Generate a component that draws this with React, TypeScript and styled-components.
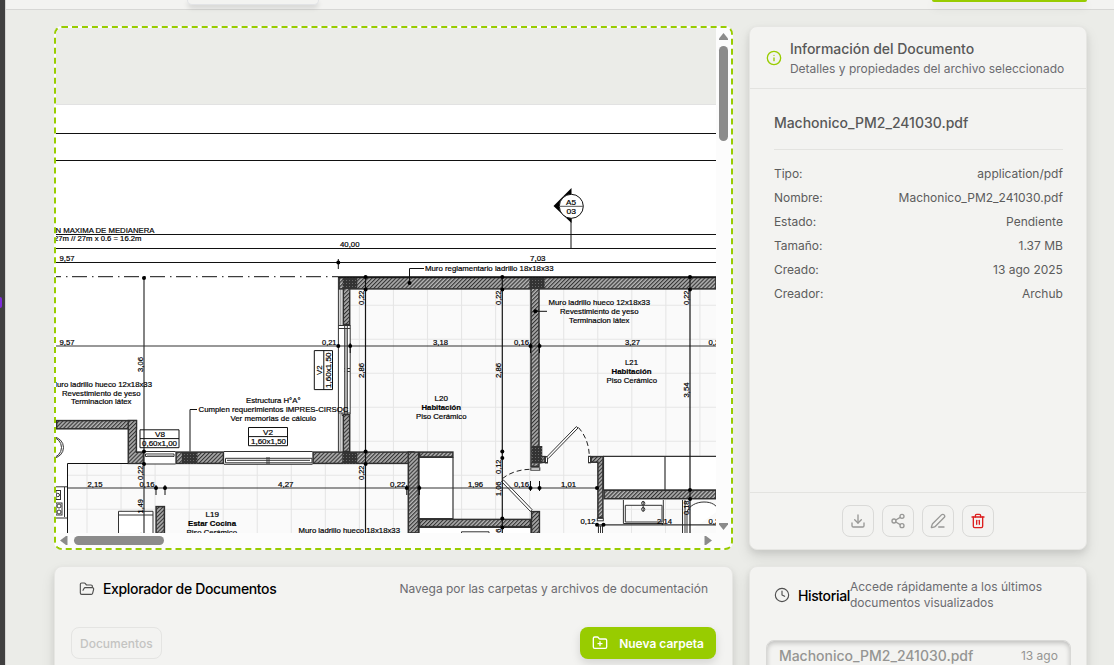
import React from 'react';
import styled, { createGlobalStyle, css } from 'styled-components';
import { Clock, Download, FolderOpen, FolderPlus, Info, PenLine, Share2, Trash2 } from 'lucide-react';

const GlobalStyle = createGlobalStyle`
  * { box-sizing: border-box; }
  body { margin: 0; overflow: hidden; font-family: Inter, sans-serif; background: #ebece8; }
  h2, h3, p, dl, dt, dd { margin: 0; font-weight: 400; }
  button { font-family: inherit; margin: 0; }
`;

const Shell = styled.div`
  display: flex;
  height: 665px;
  overflow: hidden;
  background: #ebece8;
  color: #4f4f4f;
`;

const Rail = styled.aside`
  display: flex;
  align-items: flex-start;
  flex: 0 0 6px;
  padding-top: 297px;
  background: #404040;
  border-right: 1px solid #d5d5d3;
`;

const RailMark = styled.span`
  width: 2px;
  height: 11px;
  border-radius: 0 3px 3px 0;
  background: #7c2bd9;
`;

const Page = styled.div`
  flex: 1;
  min-width: 0;
`;

const TopBar = styled.header`
  display: flex;
  justify-content: space-between;
  align-items: flex-start;
  height: 10px;
  padding: 0 27px 0 181px;
  background: #f3f3f1;
  border-bottom: 1px solid #d7d7d5;
`;

const TabsPill = styled.div`
  width: 132px;
  height: 5px;
  border: 1px solid #e2e3e6;
  border-top: 0;
  border-radius: 0 0 8px 8px;
  background: #f3f3f1;
  box-shadow: 0 3px 5px rgba(0, 0, 0, 0.14);
`;

const TopAction = styled.div`
  width: 155px;
  height: 2px;
  border-radius: 0 0 6px 6px;
  background: #98cc00;
  box-shadow: 0 5px 10px rgba(0, 0, 0, 0.16);
`;

const Grid = styled.main`
  display: grid;
  grid-template-columns: 679px 338px;
  grid-template-rows: 524px 160px;
  gap: 16px 16.4px;
  padding: 16px 0 0 48px;
`;

const cardBase = css`
  border: 1px solid #e6e6e3;
  border-radius: 8px;
  background: #f3f3f1;
  box-shadow: 0 7px 14px rgba(0, 0, 0, 0.1), 0 3px 6px rgba(0, 0, 0, 0.07);
`;

const Card = styled.section`
  ${cardBase}
  display: flex;
  flex-direction: column;
`;

const Viewer = styled.section`
  display: grid;
  grid-template-columns: 660px 15px;
  grid-template-rows: 505px 15px;
  border: 2px dashed #98cc00;
  border-radius: 8px;
  background: #fcfcfc;
  overflow: hidden;
`;

const Drawing = styled.svg`
  display: block;
  width: 660px;
  height: 505px;
`;

const ScrollTrack = styled.div<{ $horizontal?: boolean }>`
  display: flex;
  flex-direction: ${(p) => (p.$horizontal ? 'row' : 'column')};
  align-items: center;
  gap: 6px;
  padding: ${(p) => (p.$horizontal ? '0 4px' : '5px 0 3px')};
  background: #fcfcfc;
`;

const ScrollThumb = styled.span<{ $w: number; $h: number }>`
  width: ${(p) => p.$w}px;
  height: ${(p) => p.$h}px;
  margin-bottom: ${(p) => (p.$h > p.$w ? 'auto' : '0')};
  margin-right: ${(p) => (p.$w > p.$h ? 'auto' : '0')};
  border-radius: 5px;
  background: #8b8b8b;
`;

const ScrollArrow = styled.svg`
  flex: none;
  fill: #8b8b8b;
`;

const InfoHead = styled.header`
  display: flex;
  align-items: center;
  gap: 8px;
  height: 62px;
  padding: 0 15.5px;
  border-bottom: 1px solid #e3e3e0;
`;

const InfoTitle = styled.h2`
  font-size: 14px;
  line-height: 20px;
  font-weight: 500;
  letter-spacing: -0.04px;
  color: #585858;
  white-space: nowrap;
`;

const Sub = styled.p`
  font-size: 12px;
  line-height: 16px;
  color: #6b6b70;
`;

const Headings = styled.div`
  display: flex;
  flex-direction: column;
  gap: 2px;
  white-space: nowrap;
`;

const InfoBody = styled.div`
  flex: 1;
  padding: 24px 23.5px;
`;

const FileName = styled.h3`
  height: 37px;
  border-bottom: 1px solid #e3e3e0;
  font-size: 14px;
  line-height: 20px;
  font-weight: 500;
  color: #585858;
`;

const Details = styled.dl`
  display: flex;
  flex-direction: column;
  gap: 8px;
  margin-top: 16px;
  font-size: 12px;
  line-height: 16px;
  color: #5c5c5c;
`;

const Detail = styled.div`
  display: flex;
  justify-content: space-between;
`;

const InfoFoot = styled.footer`
  display: flex;
  justify-content: center;
  gap: 8px;
  height: 57px;
  padding-top: 12px;
  padding-right: 1px;
  border-top: 1px solid #e3e3e0;
`;

const IconButton = styled.button<{ $danger?: boolean }>`
  display: grid;
  place-items: center;
  width: 32px;
  height: 32px;
  padding: 0;
  border: 1px solid #dadad8;
  border-radius: 8px;
  background: transparent;
  color: ${(p) => (p.$danger ? '#dc1f1f' : '#989896')};
`;

const PanelHead = styled.header`
  display: flex;
  align-items: center;
  justify-content: space-between;
  height: 43px;
  padding: 0 24px;
`;

const PanelTitle = styled.h2`
  display: flex;
  align-items: center;
  gap: 8px;
  font-size: 14px;
  font-weight: 500;
  letter-spacing: -0.35px;
  color: #000;
  white-space: nowrap;
  svg { color: #4f4f4f; }
`;

const ActionRow = styled.div`
  display: flex;
  justify-content: space-between;
  padding: 17px 16px 0;
`;

const Crumb = styled.button`
  height: 32px;
  padding: 0 8px;
  border: 1px solid #e4e4e2;
  border-radius: 8px;
  background: transparent;
  color: #c4c4c2;
  font-size: 12px;
  font-weight: 500;
`;

const NewFolder = styled.button`
  display: flex;
  align-items: center;
  gap: 11.5px;
  height: 32px;
  padding: 0 12px;
  border: 0;
  border-radius: 8px;
  background: #98cc00;
  color: #fff;
  font-size: 12px;
  font-weight: 600;
  box-shadow: 0 4px 10px rgba(0, 0, 0, 0.13);
`;

const HistoryHead = styled.header`
  display: flex;
  align-items: center;
  height: 56px;
  padding: 0 23.5px;
`;

const HistoryRow = styled.div`
  display: flex;
  align-items: flex-start;
  justify-content: space-between;
  height: 44px;
  margin: 17px 15.5px 0;
  padding: 5px 12px;
  border: 1px solid #d8d8d6;
  border-radius: 8px;
  box-shadow: inset 0 2px 5px rgba(0, 0, 0, 0.22);
  color: #959593;
  font-size: 14px;
  line-height: 20px;
  font-weight: 500;
  small { font-size: 12px; font-weight: 400; }
`;

type Span = [number, number, number, number];

const HATCHED: Span[] = [
  [338.5, 277, 378, 12.5], [342.7, 289, 7.6, 36], [342.7, 414, 7.6, 38],
  [312.5, 451.5, 102, 12.5], [407.7, 451.5, 11.3, 82], [419, 451.5, 34.5, 6],
  [419, 518.8, 112, 8.4], [530.4, 289, 9.2, 178], [531, 511, 9, 23],
  [540, 456, 5.5, 7], [590.5, 456, 13, 6.8], [597.3, 462, 6.2, 56],
  [603.5, 489.7, 113, 9.6], [56, 420, 81, 9.4], [127.7, 420, 9.3, 44],
  [137, 451.5, 7, 12.5], [175.5, 451.5, 48.5, 12.5], [155.5, 506, 9.5, 28],
];
const COLUMNS: Span[] = [
  [342.7, 277.5, 14.6, 11.5], [529.3, 277.5, 15.4, 11.5], [342.3, 452, 15, 11.5],
  [181.8, 452, 15.6, 11.5], [532, 446, 10.3, 17.5],
];

/* x, baseline, width, text */
type Label = [number, number, number, string];
const LABELS: Label[] = [
  [55.5, 233, 99, 'N MAXIMA DE MEDIANERA'], [54, 241, 87.5, '27m // 27m x 0.6 = 16.2m'],
  [59.5, 261, 15, '9,57'], [59.5, 345, 15, '9,57'], [340, 247, 19.5, '40,00'], [530, 261, 15.5, '7,03'],
  [425, 271, 128.5, 'Muro reglamentario ladrillo 18x18x33'],
  [548.5, 305, 101.5, 'Muro ladrillo hueco 12x18x33'], [560, 314, 78.5, 'Revestimiento de yeso'],
  [569, 323, 60.5, 'Terminacion látex'],
  [322, 345, 14.5, '0,21'], [433, 345, 15, '3,18'], [514, 345, 15, '0,16'], [625, 345, 15, '3,27'], [708.5, 345, 15, '0,22'],
  [625, 365, 13, 'L21'], [606.5, 383, 50.5, 'Piso Cerámico'],
  [434.5, 401, 13.5, 'L20'], [416, 419, 50.5, 'Piso Cerámico'],
  [50.5, 387, 101.5, 'Muro ladrillo hueco 12x18x33'], [62, 396, 78.5, 'Revestimiento de yeso'], [71, 404, 60.5, 'Terminacion látex'],
  [246, 403, 54.5, 'Estructura H°A°'], [198.5, 412, 150, 'Cumplen requerimientos IMPRES-CIRSOC'], [230.5, 421, 85.5, 'Ver memorias de cálculo'],
  [155, 437, 10, 'V8'], [142, 446, 35, '0,60x1,00'], [263, 435, 10, 'V2'], [251, 444, 35, '1,60x1,50'],
  [87.5, 487, 15, '2,15'], [139.5, 487, 15, '0,16'], [278, 487, 15.5, '4,27'], [390, 487, 15.5, '0,22'],
  [468, 487, 15, '1,96'], [514, 487, 15, '0,16'], [561, 487, 15, '1,01'],
  [205.5, 517, 13.5, 'L19'], [186.5, 534.5, 50.5, 'Piso Cerámico'], [298.5, 533, 101.5, 'Muro ladrillo hueco 18x18x33'],
  [580.5, 524, 15, '0,12'], [657, 524, 15, '2,14'], [708.5, 524, 15, '0,22'],
  [566, 204.5, 10, 'A5'], [566.5, 213.5, 9.5, '03'],
];
const BOLD_LABELS: Label[] = [
  [611.5, 374, 40, 'Habitación'], [421.5, 410, 39.5, 'Habitación'], [188, 526, 48, 'Estar Cocina'],
];
/* baseline x, lower end y, width, text */
const VERTICAL_LABELS: Label[] = [
  [364.3, 305, 14.5, '0,22'], [501, 305, 14.5, '0,22'], [689, 305, 14.5, '0,22'],
  [364.3, 378, 15, '2,86'], [501, 378, 15, '2,86'], [689, 397.5, 15, '3,54'], [143.2, 372, 15, '3,06'],
  [322, 375, 9.5, 'V2'], [331, 388, 35.5, '1,60x1,50'],
  [142.8, 480, 14.5, '0,22'], [142.8, 513.5, 14.5, '1,49'], [142.8, 547, 14.5, '2,16'], [364.3, 480, 14.5, '0,22'],
  [501, 474, 14.5, '0,12'], [501, 496, 14.5, '1,06'], [501, 543, 14.5, '0,16'], [689.2, 515, 14.5, '0,18'],
];

const DOTS: [number, number][] = [
  [144, 278], [338.3, 262.5], [365.6, 277], [365.6, 289.5], [502.3, 277], [502.3, 289.5], [690, 277], [690, 289.5],
  [338.3, 346], [350.2, 346], [530.5, 346], [539.5, 346], [365.6, 451.5], [365.6, 464], [502.3, 451.5], [502.3, 458],
  [144, 451.5], [144, 464], [156, 488], [165, 488], [406.8, 488], [419.3, 488], [530.5, 488], [539.5, 488], [597, 488],
  [502.3, 518.5], [502.3, 527.5], [690, 490], [690, 499], [597, 524.8], [603.5, 524.8], [409.5, 283], [535.3, 311.3],
];
const TICKS: [number, number][] = [
  [338.3, 264], [350.2, 348], [530.5, 348], [539.5, 348], [156, 490], [165, 490], [406.8, 490], [419.3, 490], [530.5, 486], [539.5, 486],
];

const TILES_X = Array.from({ length: 19 }, (_, i) => 87 + i * 34.05);
const TILES_Y = Array.from({ length: 7 }, (_, i) => 305.3 + i * 34);

function FloorPlan() {
  return (
    <Drawing viewBox="56 28 660 505" fontFamily="'Liberation Sans', Arial, sans-serif" fontSize="7.8">
      <defs>
        <pattern id="hatch" width="2.8" height="2.8" patternUnits="userSpaceOnUse" patternTransform="rotate(45)">
          <rect width="2.8" height="2.8" fill="#b4b4b4" />
          <rect width="1.2" height="2.8" fill="#353535" />
        </pattern>
        <pattern id="concrete" width="3" height="3" patternUnits="userSpaceOnUse">
          <rect width="3" height="3" fill="#333" />
          <rect x="1" y="1" width="1" height="1" fill="#686868" />
        </pattern>
        <clipPath id="rooms">
          <path d="M350.5 289.5H716V456H604V533H419V464H407.5V533H67.5V464H350.5Z" />
        </clipPath>
      </defs>
      <rect x="56" y="28" width="660" height="76" fill="#ebece8" />
      <rect x="56" y="104" width="660" height="429" fill="#fff" />
      <path d="M56 104.5H716" stroke="#e2e2e2" />

      <g clipPath="url(#rooms)">
        <rect x="56" y="276" width="660" height="257" fill="#fafafa" />
        <path
          d={TILES_X.map((x) => `M${x} 280V533`).join('') + TILES_Y.map((y) => `M56 ${y}H716`).join('')}
          stroke="#e6e6e6"
          strokeWidth="1.1"
        />
      </g>
      <path d="M604 499H716V533H604Z" fill="#fafafa" />
      <path d="M631.5 500V533M665.5 500V533M604 509.3H716" stroke="#e6e6e6" />

      <g fill="#fff" stroke="#333">
        <path d="M419 457.5H453V518.5H419ZM603.5 456.3H717V490H603.5ZM665 456V490M419 527.5H531V535H419Z" strokeWidth="1.2" />
        <path d="M118.5 534V511.3H153V534M118.5 515H153M623.4 500V523.5H663.3V500M625.3 505.3H662V522H625.3Z" />
        <path d="M461.5 534V531.8H489V534" />
        <path d="M682.5 500V533M685 500V533M687 533V512C689 506 696 502 704 502S716 505 719 510" />
        <ellipse cx="643.2" cy="503.3" rx="1.6" ry="1.9" /><ellipse cx="643.2" cy="509.3" rx="1.6" ry="1.9" /><path d="M643.2 501V511.5" />
        <circle cx="53" cy="447.5" r="10.5" /><circle cx="51" cy="447.5" r="10.5" />
        <path d="M55 486.8H67.5V518H55M64.5 487V517" />
        <rect x="56" y="490.5" width="4.5" height="9" /><rect x="56" y="503" width="6" height="12" />
        <circle cx="59" cy="506" r="2" /><circle cx="59" cy="512" r="2" /><circle cx="57.8" cy="495" r="1.7" />
      </g>

      <g fill="#fff" stroke="#333">
        <path d="M144 451.5H175.5M144 464H175.5M145.5 454H174V456.5H145.5Z" />
        <path d="M224 451.5H312.5M224 464.3H312.5M225.5 458.3H312V462.8H225.5ZM227 460.3H310M267 457V464M269 457V464" />
        <path d="M338.4 277V452M350.2 325V414M344.7 326V414M347.3 326V414M338.4 325.5H350.2M338.4 328.5H350.2M344.5 368.5H350M344.5 371.5H350M338.4 413H350M342 413V415.5H350" />
      </g>
      <path d="M340.5 278V325M340.5 414V451M346 329V412M147 455.3H173" stroke="#aaa" strokeWidth="2" />

      <g fill="url(#hatch)" stroke="#303030" strokeWidth="1.5">
        {HATCHED.map(([x, y, w, h]) => <rect key={`${x}-${y}`} x={x + 0.6} y={y + 0.6} width={w - 1.2} height={h - 1.2} />)}
      </g>
      <g fill="url(#hatch)">
        <rect x="408.9" y="453" width="8.8" height="10.5" /><rect x="344" y="287" width="5.2" height="5" />
        <rect x="128.9" y="421.3" width="6.9" height="7" /><rect x="531.8" y="286" width="6.5" height="6" />
        <rect x="128.9" y="453" width="13" height="9.6" /><rect x="598.6" y="457.3" width="3.6" height="6" />
        <rect x="532.3" y="520" width="6.4" height="6" />
      </g>
      <g fill="url(#concrete)">
        {COLUMNS.map(([x, y, w, h]) => <rect key={`${x}-${y}`} x={x} y={y} width={w} height={h} />)}
      </g>

      <g fill="#fff" stroke="#333">
        <rect x="530.8" y="467.8" width="9" height="2.4" /><rect x="545.5" y="456.5" width="2" height="6.5" />
        <rect x="588.5" y="456.3" width="2" height="6.5" /><rect x="597.3" y="518.4" width="6" height="2.4" />
        <path d="M598.5 533V526H602.5V533M600.5 526V533" />
        <path d="M546.5 457.2L576.3 426.6L578 428L548.2 458.6Z" />
        <path d="M501.5 481.5L503.5 480L532 509.5L530.5 511.5Z" />
      </g>
      <g fill="none" stroke="#222" strokeDasharray="5 3">
        <path d="M578.5 427.5C585 435 589 444 589.3 456" />
        <path d="M502.5 478.5C510 472.5 520 469.3 531 469.3" />
      </g>

      <g stroke="#111" fill="none">
        <path d="M56 133.5H716M56 160.5H716M56 234.5H716M56 248.5H716M56 262.5H716" />
        <path d="M56 276.7H338" strokeDasharray="15 5 1.5 4.5" strokeDashoffset="10" />
        <path d="M338 277H716" strokeWidth="1.4" />
        <path d="M56 346H716M67 488H599M597 524.8H716M144 278V533" stroke="#333" strokeWidth="1.2" />
        <path d="M365.5 277V533M502.3 277V533M690 277V533" stroke="#151515" strokeWidth="1.2" />
        <path d="M67.5 534V463.5H128M571 218V248" />
        <path d="M409.5 283V268.5H424M535 311.3H547M190 451.5V409.5H197" />
        <path d="M140 429.8H179V447.7H140ZM140 438.6H179M248.5 427.5H287.5V445.7H248.5ZM248.5 436.6H287.5M314.3 350.6H332.5V389.6H314.3ZM323.8 350.6V389.6" />
        <path d={TICKS.map(([x, y]) => `M${x} ${y - 5}V${y + 5}`).join('')} />
      </g>
      <path d="M553.5 206L571.5 188V223Z" fill="#000" />
      <circle cx="571.3" cy="206.3" r="12" fill="#fff" stroke="#111" />
      <path d="M559 206.3H583.5" stroke="#555" />
      <g fill="#000">
        {DOTS.map(([x, y]) => <circle key={`${x}-${y}`} cx={x} cy={y} r="2" />)}
      </g>

      <g fill="#000" stroke="#000" strokeWidth="0.2">
        {LABELS.map(([x, y, w, t]) => (
          <text key={`${x}-${y}`} x={x} y={y} textLength={w} lengthAdjust="spacingAndGlyphs">{t}</text>
        ))}
        <g fontWeight="700">
          {BOLD_LABELS.map(([x, y, w, t]) => (
            <text key={`${x}-${y}`} x={x} y={y} textLength={w} lengthAdjust="spacingAndGlyphs">{t}</text>
          ))}
        </g>
        {VERTICAL_LABELS.map(([x, y, w, t]) => (
          <text key={`${x}-${y}`} transform={`translate(${x} ${y}) rotate(-90)`} textLength={w} lengthAdjust="spacingAndGlyphs">{t}</text>
        ))}
      </g>
    </Drawing>
  );
}

const DETAILS = [
  ['Tipo:', 'application/pdf'],
  ['Nombre:', 'Machonico_PM2_241030.pdf'],
  ['Estado:', 'Pendiente'],
  ['Tamaño:', '1.37 MB'],
  ['Creado:', '13 ago 2025'],
  ['Creador:', 'Archub'],
];

export default function App() {
  return (
    <>
      <GlobalStyle />
      <Shell>
        <Rail><RailMark /></Rail>
        <Page>
          <TopBar><TabsPill /><TopAction /></TopBar>
          <Grid>
            <Viewer>
              <FloorPlan />
              <ScrollTrack>
                <ScrollArrow width="9" height="7"><path d="M4.5 0L9 5.5V7H0V5.5Z" /></ScrollArrow>
                <ScrollThumb $w={9} $h={95} />
                <ScrollArrow width="9" height="7"><path d="M4.5 7L9 1.5V0H0V1.5Z" /></ScrollArrow>
              </ScrollTrack>
              <ScrollTrack $horizontal>
                <ScrollArrow width="8" height="9"><path d="M0 4.5L6 0H7.5V9H6Z" /></ScrollArrow>
                <ScrollThumb $w={90} $h={9} />
                <ScrollArrow width="8" height="9"><path d="M8 4.5L2 0H.5V9H2Z" /></ScrollArrow>
              </ScrollTrack>
            </Viewer>

            <Card>
              <InfoHead>
                <Info size={16} color="#98cc00" />
                <Headings>
                  <InfoTitle>Información del Documento</InfoTitle>
                  <Sub>Detalles y propiedades del archivo seleccionado</Sub>
                </Headings>
              </InfoHead>
              <InfoBody>
                <FileName>Machonico_PM2_241030.pdf</FileName>
                <Details>
                  {DETAILS.map(([name, value]) => (
                    <Detail key={name}><dt>{name}</dt><dd>{value}</dd></Detail>
                  ))}
                </Details>
              </InfoBody>
              <InfoFoot>
                <IconButton><Download size={16} /></IconButton>
                <IconButton><Share2 size={16} /></IconButton>
                <IconButton><PenLine size={16} /></IconButton>
                <IconButton $danger><Trash2 size={16} /></IconButton>
              </InfoFoot>
            </Card>

            <Card>
              <PanelHead>
                <PanelTitle><FolderOpen size={16} strokeWidth={1.7} />Explorador de Documentos</PanelTitle>
                <Sub>Navega por las carpetas y archivos de documentación</Sub>
              </PanelHead>
              <ActionRow>
                <Crumb>Documentos</Crumb>
                <NewFolder><FolderPlus size={16} />Nueva carpeta</NewFolder>
              </ActionRow>
            </Card>

            <Card>
              <HistoryHead>
                <PanelTitle><Clock size={16} strokeWidth={1.7} />Historial</PanelTitle>
                <Sub>Accede rápidamente a los últimos documentos visualizados</Sub>
              </HistoryHead>
              <HistoryRow>Machonico_PM2_241030.pdf<small>13 ago</small></HistoryRow>
            </Card>
          </Grid>
        </Page>
      </Shell>
    </>
  );
}
